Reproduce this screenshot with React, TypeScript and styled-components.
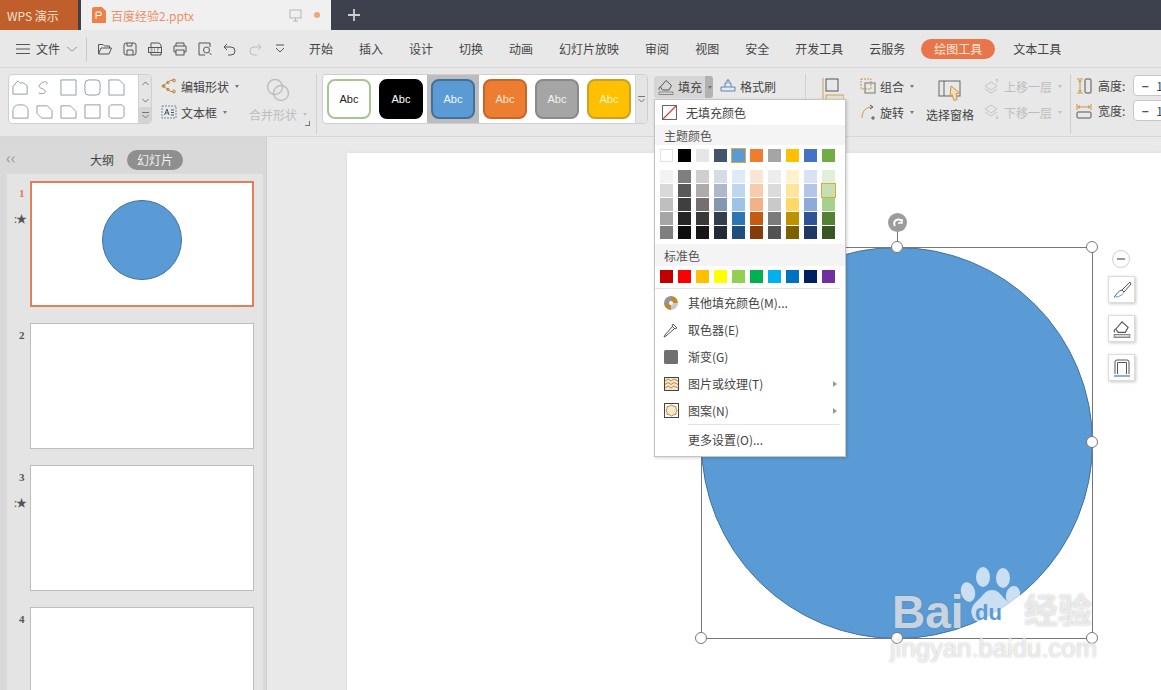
import React from "react";
import styled, { createGlobalStyle } from "styled-components";

const Global = createGlobalStyle`
  html, body { margin: 0; padding: 0; background: #e9e9e9; }
  * { box-sizing: border-box; }
  body { font-family: "Noto Sans CJK SC", "Noto Sans", sans-serif; font-size: 12px; color: #444; }
  svg { flex: none; }
`;

const Root = styled.div`
  position: relative; width: 1161px; height: 690px; overflow: hidden;
  display: flex; flex-direction: column; background: #e9e9e9;
`;
const TitleBar = styled.div`
  height: 30px; flex: none; display: flex; align-items: stretch; background: #3d414d;
`;
const WpsTab = styled.div`
  width: 78px; background: #c05f2c; color: #f6e0d0; display: flex; align-items: center; padding-left: 7px; font-size: 12px;
`;
const DocTab = styled.div`
  width: 250px; margin-left: 3px; background: #f0f0f0; display: flex; align-items: center; padding-left: 11px; color: #ec9068; font-size: 12px;
`;
const DocName = styled.span` margin-left: 5px; width: 178px; `;
const UnsavedDot = styled.span`
  width: 6px; height: 6px; border-radius: 50%; background: #f2a779; margin-left: 12px;
`;
const AddTab = styled.div`
  width: 46px; display: flex; align-items: center; justify-content: center;
`;

const MenuBar = styled.div`
  height: 38px; flex: none; display: flex; align-items: center; background: #e8e8e8; border-bottom: 1px solid #d8d8d8; padding-left: 16px;
`;
const FileLabel = styled.span` margin: 0 7px 0 6px; color: #444; `;
const QuickSep = styled.span` width: 1px; height: 24px; background: #c8c8c8; margin: 0 5px 0 9px; `;
const QuickIcon = styled.span`
  width: 25px; height: 18px; display: flex; align-items: center; justify-content: center;
`;
const QuickRow = styled.div` display: flex; width: 200px; margin-right: 4px; `;
const MenuItem = styled.span`
  padding: 0 13px; color: #444; white-space: nowrap; line-height: 18px;
`;
const ActivePill = styled.span`
  height: 20px; width: 74px; margin: 0 5px 0 3px; border-radius: 10px; background: #e8764a; color: #fbe6da;
  display: flex; align-items: center; justify-content: center;
`;

const Ribbon = styled.div`
  height: 69px; flex: none; display: flex; align-items: flex-start; padding: 6px 0 0 8px; background: #e8e8e8; border-bottom: 1px solid #d6d6d6;
`;
const Gallery = styled.div<{ $w: number }>`
  width: ${(p) => p.$w}px; height: 50px; flex: none; background: #fff; border: 1px solid #cfcfcf; border-radius: 4px; display: flex; overflow: hidden;
`;
const ShapeGrid = styled.div`
  width: 128px; display: grid; grid-template-columns: repeat(5, 24px); grid-auto-rows: 24px; margin-left: -1px;
`;
const ShapeCell = styled.span` display: flex; align-items: center; justify-content: center; `;
const ScrollCol = styled.div`
  margin-left: auto; width: 13px; background: #e4e4e4; border-left: 1px solid #d2d2d2; display: flex; flex-direction: column;
`;
const ScrollBtn = styled.span<{ $dark?: boolean }>`
  flex: 1; display: flex; align-items: center; justify-content: center;
  background: ${(p) => (p.$dark ? "#d4d4d4" : "transparent")};
`;
const Col = styled.div<{ $ml: number; $w: number }>`
  position: relative; flex: none; margin-left: ${(p) => p.$ml}px; width: ${(p) => p.$w}px; margin-top: -1px; display: flex; flex-direction: column;
`;
const ToolRow = styled.div<{ $off?: boolean }>`
  height: 26px; display: flex; align-items: center; gap: 4px; white-space: nowrap; color: ${(p) => (p.$off ? "#bdbdbd" : "#444")};
`;
const Caret = styled.span<{ $off?: boolean }>`
  width: 0; height: 0; border: 2.5px solid transparent; border-top: 3px solid ${(p) => (p.$off ? "#c0c0c0" : "#777")}; margin: 3px 0 0 2px;
`;
const BigTool = styled.div<{ $h: number }>`
  display: flex; flex-direction: column; align-items: center; justify-content: space-between; height: ${(p) => p.$h}px; color: #444;
  white-space: nowrap; padding-top: 5px;
`;
const Corner = styled.span`
  position: absolute; right: -2px; bottom: 0; width: 5px; height: 5px; border-right: 1px solid #777; border-bottom: 1px solid #777;
`;
const RibbonSep = styled.span<{ $ml: number; $mr?: number }>`
  width: 1px; height: 60px; flex: none; margin: 0 ${(p) => p.$mr ?? 0}px 0 ${(p) => p.$ml}px; background: #d0d0d0;
`;
const StyleCell = styled.div<{ $sel?: boolean }>`
  width: 52px; height: 48px; flex: none; display: flex; align-items: center; justify-content: center; background: ${(p) => (p.$sel ? "#bcbcbc" : "transparent")};
`;
const StyleChip = styled.div<{ $bg: string; $bd: string; $fg: string }>`
  width: 44px; height: 40px; border-radius: 8px; background: ${(p) => p.$bg}; border: 2px solid ${(p) => p.$bd}; color: ${(p) => p.$fg};
  display: flex; align-items: center; justify-content: center; font: 11px "Liberation Sans", sans-serif;
`;
const FillBtn = styled.div`
  width: 59px; height: 22px; margin-top: 1px; border-radius: 3px; background: #d6d6d6; display: flex; align-items: center; overflow: hidden; padding-left: 3px; gap: 3px; flex: none;
`;
const FillArrow = styled.span`
  width: 11px; height: 22px; margin-left: auto; background: #b2b2b2; display: flex; align-items: center; justify-content: center;
`;
const FillTop = styled.div` display: flex; align-items: center; gap: 7px; white-space: nowrap; `;
const Stepper = styled.div`
  width: 70px; height: 21px; margin-left: 2px; background: #fff; border: 1px solid #c8c8c8; border-radius: 4px; display: flex; align-items: center; flex: none; overflow: hidden;
`;
const StepMinus = styled.span`
  width: 22px; text-align: center; color: #555; font-weight: 700; flex: none; margin-right: 0;
`;
const DimRow = styled.div`
  height: 25px; display: flex; align-items: center; gap: 6px; white-space: nowrap;
`;

const Main = styled.div` flex: 1; display: flex; min-height: 0; `;
const Side = styled.aside`
  width: 267px; flex: none; background: #d9d9d9; border-right: 1px solid #cfcfcf; display: flex; flex-direction: column;
`;
const SideHead = styled.div`
  height: 37px; flex: none; position: relative; display: flex; align-items: center; padding: 8px 0 0 90px; gap: 13px;
`;
const Collapse = styled.span`
  position: absolute; left: 6px; top: 13px; color: #999; font-size: 16px; line-height: 14px;
`;
const TabPill = styled.span`
  width: 56px; height: 20px; border-radius: 10px; background: #8f8f8f; color: #f2f2f2; display: flex; align-items: center; justify-content: center;
`;
const ThumbList = styled.div`
  margin: 0 3px 0 7px; flex: 1; background: #e4e4e4; padding: 7px 0 0 23px; display: flex; flex-direction: column; gap: 16px; overflow: hidden;
`;
const ThumbRow = styled.div` position: relative; flex: none; `;
const ThumbNo = styled.span<{ $on?: boolean }>`
  position: absolute; left: -11px; top: 6px; font: 700 11px "Liberation Serif", serif; color: ${(p) => (p.$on ? "#e07a50" : "#555")};
`;
const ThumbStar = styled.span`
  position: absolute; left: -16px; top: 31px; font-size: 11px; color: #555; line-height: 12px; letter-spacing: -1px;
`;
const Thumb = styled.div<{ $on?: boolean }>`
  width: 224px; height: 126px; background: #fff; border: ${(p) => (p.$on ? "2px solid #e08058" : "1px solid #bdbdbd")};
  display: flex; align-items: center; justify-content: center;
`;
const ThumbCircle = styled.div`
  width: 80px; height: 80px; margin-bottom: 8px; border-radius: 50%; background: #5b9bd5; border: 1px solid #41719c;
`;

const Canvas = styled.main` flex: 1; min-width: 0; padding: 16px 0 0 80px; `;
const Slide = styled.div` position: relative; height: 600px; background: #fff; box-shadow: 0 0 3px rgba(0,0,0,.08); `;
const BigCircle = styled.div`
  position: absolute; left: 354px; top: 94px; width: 392px; height: 392px; border-radius: 50%; background: #5b9bd5; border: 1px solid #41719c;
`;
const SelBox = styled.div`
  position: absolute; left: 354px; top: 94px; width: 392px; height: 392px; border: 1px solid #777;
`;
const Handle = styled.span<{ $x: number; $y: number }>`
  position: absolute; left: ${(p) => p.$x - 6}px; top: ${(p) => p.$y - 6}px; width: 12px; height: 12px; border-radius: 50%; background: #fff; border: 1px solid #777;
`;
const RotateStem = styled.span`
  position: absolute; left: 550px; top: 76px; width: 1px; height: 14px; background: #777;
`;
const RotateHandle = styled.span`
  position: absolute; left: 541px; top: 60px; width: 19px; height: 19px; border-radius: 50%; background: #9c9c9c; display: flex; align-items: center; justify-content: center;
`;
const MinusBadge = styled.span`
  position: absolute; left: 765px; top: 97px; width: 18px; height: 18px; border-radius: 50%; background: #fff; border: 1px solid #d0d0d0; display: flex; align-items: center; justify-content: center;
`;
const FloatBtn = styled.span<{ $y: number }>`
  position: absolute; left: 761px; top: ${(p) => p.$y}px; width: 27px; height: 27px; background: #fff; border: 1px solid #dcdcdc; box-shadow: 1px 1px 3px rgba(0,0,0,.22);
  display: flex; align-items: center; justify-content: center;
`;

const Dropdown = styled.div`
  position: absolute; left: 654px; top: 99px; width: 192px; height: 358px; background: #fff; border: 1px solid #c4c4c4; box-shadow: 1px 1px 3px rgba(0,0,0,.18); z-index: 5;
  display: flex; flex-direction: column;
`;
const NoFillRow = styled.div` height: 25px; flex: none; display: flex; align-items: center; padding-left: 7px; gap: 9px; `;
const SectionHead = styled.div<{ $h: number; $mt?: number }>`
  height: ${(p) => p.$h}px; flex: none; margin-top: ${(p) => p.$mt ?? 0}px; background: #f4f4f4; padding-left: 9px; display: flex; align-items: center; color: #555;
`;
const SwatchRow = styled.div` display: flex; gap: 5px; padding: 4px 0 0 5px; flex: none; `;
const TintGrid = styled.div`
  display: grid; grid-template-columns: repeat(10, 13px); column-gap: 5px; row-gap: 1px; padding: 8px 0 0 5px; flex: none;
`;
const Swatch = styled.span<{ $c: string; $sel?: boolean; $bd?: boolean }>`
  width: 13px; height: 13px; background: ${(p) => p.$c};
  ${(p) => (p.$bd ? "border: 1px solid #e2e2e2;" : "")}
  ${(p) => (p.$sel ? "outline: 1px solid #e2a93a; position: relative; z-index: 1;" : "")}
`;
const MenuSep = styled.div<{ $mt?: number; $ml: number }>`
  height: 1px; flex: none; margin: ${(p) => p.$mt ?? 0}px 5px 0 ${(p) => p.$ml}px; background: #e4e4e4;
`;
const MenuRow = styled.div<{ $h?: number }>`
  height: ${(p) => p.$h ?? 27}px; flex: none; display: flex; align-items: center; padding: 0 9px 0 8px; gap: 9px; color: #444; font-size: 12px; white-space: nowrap;
`;
const MenuIconSlot = styled.span` width: 16px; height: 16px; display: flex; flex: none; align-items: center; justify-content: center; `;
const Arrow = styled.span`
  margin-left: auto; width: 0; height: 0; border: 3px solid transparent; border-left: 4px solid #999; margin-right: -4px;
`;

const Wm = styled.span`
  position: absolute; z-index: 4; color: rgba(255,255,255,.68); text-shadow: 0 0 2px rgba(100,100,100,.45); white-space: nowrap; line-height: 1;
`;
const WmBai = styled(Wm)` left: 892px; top: 589px; font: 700 46px/1 "Liberation Sans", sans-serif; `;
const WmCn = styled(Wm)` left: 1024px; top: 592px; font: 700 34px/1 "Noto Sans CJK SC", sans-serif; `;
const WmUrl = styled(Wm)` left: 890px; top: 636px; font: 400 25.7px/1 "Liberation Sans", sans-serif; `;
const WmDu = styled.span`
  position: absolute; z-index: 5; left: 975px; top: 602px; color: #5b9bd5; font: 700 22px/1 "Liberation Sans", sans-serif; white-space: nowrap;
`;
const PawSvg = styled.svg` position: absolute; z-index: 4; left: 955px; top: 562px; `;

type IP = { s?: number; c?: string };
const G = ({ s = 16, c = "#666", children, vb = 16 }: IP & { children: React.ReactNode; vb?: number }) => (
  <svg width={s} height={s} viewBox={`0 0 ${vb} ${vb}`} fill="none" stroke={c} strokeWidth="1">{children}</svg>
);

const quick = [
  <path d="M1.5 13V3.5h4.5l1.5 1.5h5v2M1.5 13l2.5-6h10.5l-2.5 6z" />,
  <><rect x="2" y="2" width="12" height="12" rx="2" /><path d="M5 14V9h6v5M5 2v3h5V2" /></>,
  <><path d="M4 6V2h8l2 2v2M4 12v2h10v-2" /><rect x="1.5" y="6.5" width="13" height="5" /><path d="M3.5 8h2M7 8h1M10 8h2M3.5 10h2M7 10h1M10 10h1" strokeWidth=".8" /></>,
  <><path d="M4 5V2h8v3M4 11H2V5h12v6h-2" /><rect x="4" y="9" width="8" height="5" /></>,
  <><path d="M13 6V2H2v12h6" /><circle cx="9.5" cy="9" r="3" /><path d="M12 11.5l2.5 2.5" /></>,
  <><path d="M5 3L2 6l3 3" /><path d="M2 6h7a4 4 0 010 8H6" /></>,
];

const shapes = [
  "M1 16V8l5-6c2 1 2 3 4 2s4 2 6 3v9z", "M3 15c8 2 9-3 3-5s-1-6 3-7c2 0 4 1 2 3", "M1 1h16v16H1z", "M5 1h8a4 4 0 014 4v8a4 4 0 01-4 4H5a4 4 0 01-4-4V5a4 4 0 014-4z", "M1 1h11l5 5v11H1z",
  "M1 16V8a6 6 0 016-6h4a6 6 0 016 6v8z", "M1 3h11l5 5v8H6l-5-5z", "M1 16V3h10l6 6v7z", "M1 2h16v14H1z", "M3 2h12l2 2v10l-2 2H3l-2-2V4z",
];

const styleChips = [
  ["#fff", "#a8c491", "#222"], ["#000", "#000", "#fff"], ["#5b9bd5", "#41719c", "#f0f6fc"],
  ["#ed7d31", "#c8662a", "#fde8d8"], ["#a5a5a5", "#8a8a8a", "#f2f2f2"], ["#ffc000", "#c9a227", "#fff3cc"],
];

const theme = ["#ffffff", "#000000", "#e7e6e6", "#44546a", "#5b9bd5", "#ed7d31", "#a5a5a5", "#ffc000", "#4472c4", "#70ad47"];
const tints = [
  ["#f2f2f2", "#7f7f7f", "#d0cece", "#d6dce4", "#deebf6", "#fbe5d5", "#ededed", "#fff2cc", "#d9e2f3", "#e2efd9"],
  ["#d9d9d9", "#595959", "#aeabab", "#adb9ca", "#bdd7ee", "#f7cbac", "#dbdbdb", "#fee599", "#b4c6e7", "#c5e0b3"],
  ["#bfbfbf", "#3f3f3f", "#757070", "#8496b0", "#9dc3e6", "#f4b183", "#c9c9c9", "#ffd965", "#8eaadb", "#a8d08d"],
  ["#a6a6a6", "#262626", "#3a3838", "#333f4f", "#2e75b5", "#c55a11", "#7b7b7b", "#bf9000", "#2f5496", "#538135"],
  ["#7f7f7f", "#0d0d0d", "#171616", "#222a35", "#1e4e79", "#843c0b", "#525252", "#7f6000", "#1f3864", "#375623"],
];
const stdColors = ["#c00000", "#ff0000", "#ffc000", "#ffff00", "#92d050", "#00b050", "#00b0f0", "#0070c0", "#002060", "#7030a0"];
const tabs = ["开始", "插入", "设计", "切换", "动画", "幻灯片放映", "审阅", "视图", "安全", "开发工具", "云服务"];

const ScrollMark = ({ up, bar }: { up?: boolean; bar?: boolean }) => (
  <svg width="9" height="9" viewBox="0 0 9 9" fill="none" stroke="#777">
    {bar && <path d="M1 1.500h7" />}
    <path d={up ? "M1.500 6L4.500 3l3 3" : "M1.500 4L4.500 7l3-3"} />
  </svg>
);

const FillIcon = ({ s = 18 }: { s?: number }) => (
  <svg width={s} height={s} viewBox="0 0 18 18" fill="none" stroke="#555">
    <path d="M3.500 9L9 2.500l5.500 5L12 12H5.500z" />
    <path d="M3.500 9C2 9 1.500 11 2.500 12" />
    <path d="M2 14h14v2.500H2z" fill="#d8d8d8" stroke="#888" />
  </svg>
);

export default function App() {
  return (
    <Root>
      <Global />
      <TitleBar>
        <WpsTab>WPS 演示</WpsTab>
        <DocTab>
          <svg width="14" height="16" viewBox="0 0 14 16"><path d="M2 0h8l4 4v12H0V2a2 2 0 012-2z" fill="#ee8244" /><path d="M4 12V5h5v3.5H4" fill="none" stroke="#fff" /></svg>
          <DocName>百度经验2.pptx</DocName>
          <G s={13} vb={13} c="#b5b5b5"><rect x="1" y="1" width="11" height="8" /><path d="M6.5 9v3M4 12h5" /></G>
          <UnsavedDot />
        </DocTab>
        <AddTab><G s={14} vb={14} c="#cfcfcf"><path d="M7 1v12M1 7h12" strokeWidth="1.8" /></G></AddTab>
      </TitleBar>

      <MenuBar>
        <G s={14} vb={14} c="#555"><path d="M0 2.5h14M0 7h14M0 11.5h14" /></G>
        <FileLabel>文件</FileLabel>
        <G s={10} vb={10} c="#999"><path d="M0 3l5 4 5-4" /></G>
        <QuickSep />
        <QuickRow>
          {quick.map((q, i) => <QuickIcon key={i}><G s={16} c="#555">{q}</G></QuickIcon>)}
          <QuickIcon><G s={16} c="#bbb"><path d="M11 3l3 3-3 3" /><path d="M14 6H7a4 4 0 000 8h3" /></G></QuickIcon>
          <QuickIcon><G s={10} vb={10} c="#555"><path d="M1 1h8M1 4l4 4 4-4" /></G></QuickIcon>
        </QuickRow>
        {tabs.map((t) => <MenuItem key={t}>{t}</MenuItem>)}
        <ActivePill>绘图工具</ActivePill>
        <MenuItem>文本工具</MenuItem>
      </MenuBar>

      <Ribbon>
        <Gallery $w={144}>
          <ShapeGrid>
            {shapes.map((d, i) => <ShapeCell key={i}><G s={17} vb={18} c="#8b9aa6"><path d={d} /></G></ShapeCell>)}
          </ShapeGrid>
          <ScrollCol>
            <ScrollBtn><ScrollMark up /></ScrollBtn><ScrollBtn><ScrollMark /></ScrollBtn><ScrollBtn $dark><ScrollMark bar /></ScrollBtn>
          </ScrollCol>
        </Gallery>

        <Col $ml={9} $w={80}>
          <ToolRow>
            <G s={16} c="#b5853a"><path d="M13 2C8 2 6 5 2 8c4 2 6 6 11 6" /><circle cx="13" cy="2.5" r="1.4" /><circle cx="2.5" cy="8" r="1.4" /><circle cx="13" cy="13.5" r="1.4" /><circle cx="7" cy="4.5" r="1.2" /><circle cx="7" cy="11.5" r="1.2" /></G>
            编辑形状<Caret />
          </ToolRow>
          <ToolRow>
            <G s={16} c="#6b88b5"><rect x="1" y="2" width="14" height="12" strokeDasharray="2 1" /><path d="M3.5 11L6 5l2 6M4.500 9h3M10 6h3M10 8.500h3M10 11h3" stroke="#555" /></G>
            文本框<Caret />
          </ToolRow>
        </Col>

        <Col $ml={7} $w={60}>
          <BigTool $h={53}>
            <G s={24} vb={24} c="#bdbdbd"><circle cx="9" cy="9" r="7.500" strokeWidth="1.4" /><circle cx="15" cy="15" r="7.500" strokeWidth="1.4" /></G>
            <ToolRow $off>合并形状<Caret $off /></ToolRow>
          </BigTool>
          <Corner />
        </Col>

        <RibbonSep $ml={8} $mr={5} />

        <Gallery $w={326}>
          {styleChips.map(([bg, bd, fg], i) => (
            <StyleCell key={i} $sel={i === 2}><StyleChip $bg={bg} $bd={bd} $fg={fg}>Abc</StyleChip></StyleCell>
          ))}
          <ScrollCol><ScrollBtn><ScrollMark bar /></ScrollBtn></ScrollCol>
        </Gallery>

        <Col $ml={6} $w={150}>
          <FillTop>
            <FillBtn><FillIcon />填充<FillArrow><Caret /></FillArrow></FillBtn>
            <ToolRow>
              <G s={16} c="#5b86b8"><path d="M1 9h14v4H1zM5 9V5h2V2h2v3h2v4" /></G>格式刷
            </ToolRow>
          </FillTop>
        </Col>

        <RibbonSep $ml={1} />

        <Col $ml={15} $w={24}>
          <BigTool $h={40}>
            <svg width="22" height="30" viewBox="0 0 22 30" fill="none" stroke="#555"><path d="M1 0v30" stroke="#c9a25a" /><rect x="4" y="1" width="12" height="12" /><rect x="4" y="17" width="18" height="13" fill="#eadfce" stroke="#c9a25a" /></svg>
          </BigTool>
        </Col>

        <Col $ml={15} $w={64}>
          <ToolRow>
            <G s={16} c="#c9963c"><rect x="1" y="1" width="10" height="10" strokeDasharray="2 1" /><rect x="5" y="5" width="10" height="10" stroke="#777" /></G>组合<Caret />
          </ToolRow>
          <ToolRow>
            <G s={16} c="#c9963c"><path d="M2 14C2 7 6 3 12 3" /><path d="M10 1l3 2-3 2M11 14h4M13 12v4" stroke="#555" /></G>旋转<Caret />
          </ToolRow>
        </Col>

        <Col $ml={1} $w={50}>
          <BigTool $h={50}>
            <svg width="24" height="24" viewBox="0 0 24 24" fill="none" stroke="#666"><rect x="1" y="3" width="21" height="15" /><path d="M6 3v15" /><path d="M13 8l9 7-4 .5 1 6-3 1-2-6-2 2z" fill="#f3dcc4" stroke="#c9963c" /></svg>
            <span>选择窗格</span>
          </BigTool>
        </Col>

        <Col $ml={9} $w={82}>
          <ToolRow $off>
            <G s={16} c="#c4c4c4"><path d="M1 8l6-4 6 4-6 4zM1 11l6 4 6-4M13 1v4M11.500 2.500L13 1l1.500 1.500" /></G>上移一层<Caret $off />
          </ToolRow>
          <ToolRow $off>
            <G s={16} c="#c4c4c4"><path d="M1 5l6-4 6 4-6 4zM1 8l6 4 6-4M13 11v4M11.500 13.500L13 15l1.500-1.500" /></G>下移一层<Caret $off />
          </ToolRow>
        </Col>

        <RibbonSep $ml={4} />

        <Col $ml={5} $w={140}>
          <DimRow>
            <G s={16} c="#555"><path d="M1 1h6M1 15h6" stroke="#c9963c" /><path d="M4 2v12M2.500 4L4 2l1.500 2M2.500 12L4 14l1.500-2" stroke="#c9963c" /><rect x="9" y="1" width="6" height="14" rx="1" /></G>
            <span>高度:</span>
            <Stepper><StepMinus>−</StepMinus><span>1</span></Stepper>
          </DimRow>
          <DimRow>
            <G s={16} c="#555"><path d="M1 1v6M15 1v6M2 4h12M4 2.500L2 4l2 1.500M12 2.500L14 4l-2 1.500" stroke="#c9963c" /><rect x="1" y="9" width="14" height="6" rx="1" /></G>
            <span>宽度:</span>
            <Stepper><StepMinus>−</StepMinus><span>1</span></Stepper>
          </DimRow>
        </Col>
      </Ribbon>

      <Main>
        <Side>
          <SideHead>
            <Collapse>‹‹</Collapse>
            <span>大纲</span>
            <TabPill>幻灯片</TabPill>
          </SideHead>
          <ThumbList>
            <ThumbRow>
              <ThumbNo $on>1</ThumbNo><ThumbStar>:★</ThumbStar>
              <Thumb $on><ThumbCircle /></Thumb>
            </ThumbRow>
            <ThumbRow><ThumbNo>2</ThumbNo><Thumb /></ThumbRow>
            <ThumbRow><ThumbNo>3</ThumbNo><ThumbStar>:★</ThumbStar><Thumb /></ThumbRow>
            <ThumbRow><ThumbNo>4</ThumbNo><Thumb /></ThumbRow>
          </ThumbList>
        </Side>
        <Canvas>
          <Slide>
            <BigCircle />
            <SelBox />
            <RotateStem />
            <RotateHandle>
              <G s={12} vb={12} c="#fff"><path d="M9.500 4A4 4 0 103 9" strokeWidth="2" /><path d="M6 6h4V2" strokeWidth="1.500" /></G>
            </RotateHandle>
            <Handle $x={550} $y={94} /><Handle $x={745} $y={94} />
            <Handle $x={354} $y={289} /><Handle $x={745} $y={289} />
            <Handle $x={354} $y={485} /><Handle $x={550} $y={485} /><Handle $x={745} $y={485} />
            <MinusBadge><G s={10} vb={10} c="#777"><path d="M1 5h8" strokeWidth="1.500" /></G></MinusBadge>
            <FloatBtn $y={123}>
              <svg width="20" height="20" viewBox="0 0 20 20" fill="none" stroke="#555"><path d="M18 2l-8 8 2 2 7-8zM10 10c-4 1-5 4-8 7" /><path d="M2 17c4 0 8-1 10-5" stroke="#5b9bd5" /></svg>
            </FloatBtn>
            <FloatBtn $y={162}><FillIcon s={20} /></FloatBtn>
            <FloatBtn $y={201}>
              <svg width="20" height="20" viewBox="0 0 20 20" fill="none" stroke="#555"><path d="M3 16V4a2 2 0 012-2h10a2 2 0 012 2v12" /><path d="M5.500 16V4.500h9V16" /><path d="M2 18h16" stroke="#5b9bd5" strokeWidth="1.500" /></svg>
            </FloatBtn>
          </Slide>
        </Canvas>
      </Main>

      <Dropdown>
        <NoFillRow>
          <svg width="15" height="15" viewBox="0 0 15 15" fill="none"><rect x=".5" y=".5" width="14" height="14" stroke="#666" /><path d="M1 14L14 1" stroke="#d2413a" strokeWidth="1.200" /></svg>
          无填充颜色
        </NoFillRow>
        <SectionHead $h={20}>主题颜色</SectionHead>
        <SwatchRow>
          {theme.map((c, i) => <Swatch key={c} $c={c} $bd={i === 0} $sel={i === 4} />)}
        </SwatchRow>
        <TintGrid>
          {tints.flatMap((r, ri) => r.map((c, ci) => <Swatch key={`${ri}-${ci}`} $c={c} $sel={ri === 1 && ci === 9} />))}
        </TintGrid>
        <SectionHead $h={22} $mt={5}>标准色</SectionHead>
        <SwatchRow>
          {stdColors.map((c) => <Swatch key={c} $c={c} />)}
        </SwatchRow>
        <MenuSep $mt={5} $ml={0} />
        <MenuRow>
          <MenuIconSlot>
            <svg width="16" height="16" viewBox="0 0 16 16"><path d="M8 8V1a7 7 0 017 7z" fill="#c08a2e" /><path d="M8 8h7a7 7 0 01-7 7z" fill="#c9c9c9" /><path d="M8 8v7a7 7 0 01-7-7z" fill="#b9893a" /><path d="M8 8H1a7 7 0 017-7z" fill="#8c97a5" /><circle cx="8" cy="8" r="2" fill="#fff" /></svg>
          </MenuIconSlot>
          其他填充颜色(M)...
        </MenuRow>
        <MenuRow>
          <MenuIconSlot>
            <svg width="16" height="16" viewBox="0 0 16 16" fill="none" stroke="#555"><path d="M10 2l4 4-2 1-3-3zM9 5l-7 8-1 2 2-1 8-7" /></svg>
          </MenuIconSlot>
          取色器(E)
        </MenuRow>
        <MenuRow>
          <MenuIconSlot>
            <svg width="14" height="14" viewBox="0 0 14 14"><rect width="14" height="14" rx="1.500" fill="#707070" /></svg>
          </MenuIconSlot>
          渐变(G)
        </MenuRow>
        <MenuRow>
          <MenuIconSlot>
            <svg width="15" height="14" viewBox="0 0 15 14" fill="#f6e6cf" stroke="#b98a3d"><rect x=".5" y=".5" width="14" height="13" stroke="#444" /><path d="M1 4l3-2 3 2 3-2 4 2M1 7.500l3-2 3 2 3-2 4 2M1 11l3-2 3 2 3-2 4 2" fill="none" /></svg>
          </MenuIconSlot>
          图片或纹理(T)<Arrow />
        </MenuRow>
        <MenuRow>
          <MenuIconSlot>
            <svg width="15" height="15" viewBox="0 0 15 15" fill="none"><rect x=".5" y=".5" width="14" height="14" stroke="#444" /><path d="M7.500 2l2 1.200 2.300.300.300 2.300 1 1.700-1 1.700-.3 2.300-2.300.300-2 1.200-2-1.200-2.300-.300-.3-2.300-1-1.700 1-1.700.3-2.300 2.300-.300z" fill="#f8e8d0" stroke="#b98a3d" /></svg>
          </MenuIconSlot>
          图案(N)<Arrow />
        </MenuRow>
        <MenuSep $ml={33} />
        <MenuRow $h={28}>
          <MenuIconSlot />
          更多设置(O)...
        </MenuRow>
      </Dropdown>

      <WmBai>Bai</WmBai>
      <PawSvg width="70" height="70" viewBox="0 0 70 70" fill="rgba(255,255,255,.68)">
        <ellipse cx="28" cy="15" rx="7" ry="10" />
        <ellipse cx="48" cy="16" rx="7" ry="10" />
        <ellipse cx="13" cy="30" rx="7" ry="10" transform="rotate(-15 13 30)" />
        <ellipse cx="58" cy="33" rx="7" ry="9" transform="rotate(15 58 33)" />
        <path d="M37 28c7 0 9 6 14 10 6 5 8 9 6 15-2 8-11 9-20 8-9 1-18 0-20-8-2-6 1-10 6-15 5-4 7-10 14-10z" />
      </PawSvg>
      <WmDu>du</WmDu>
      <WmCn>经验</WmCn>
      <WmUrl>jingyan.baidu.com</WmUrl>
    </Root>
  );
}
